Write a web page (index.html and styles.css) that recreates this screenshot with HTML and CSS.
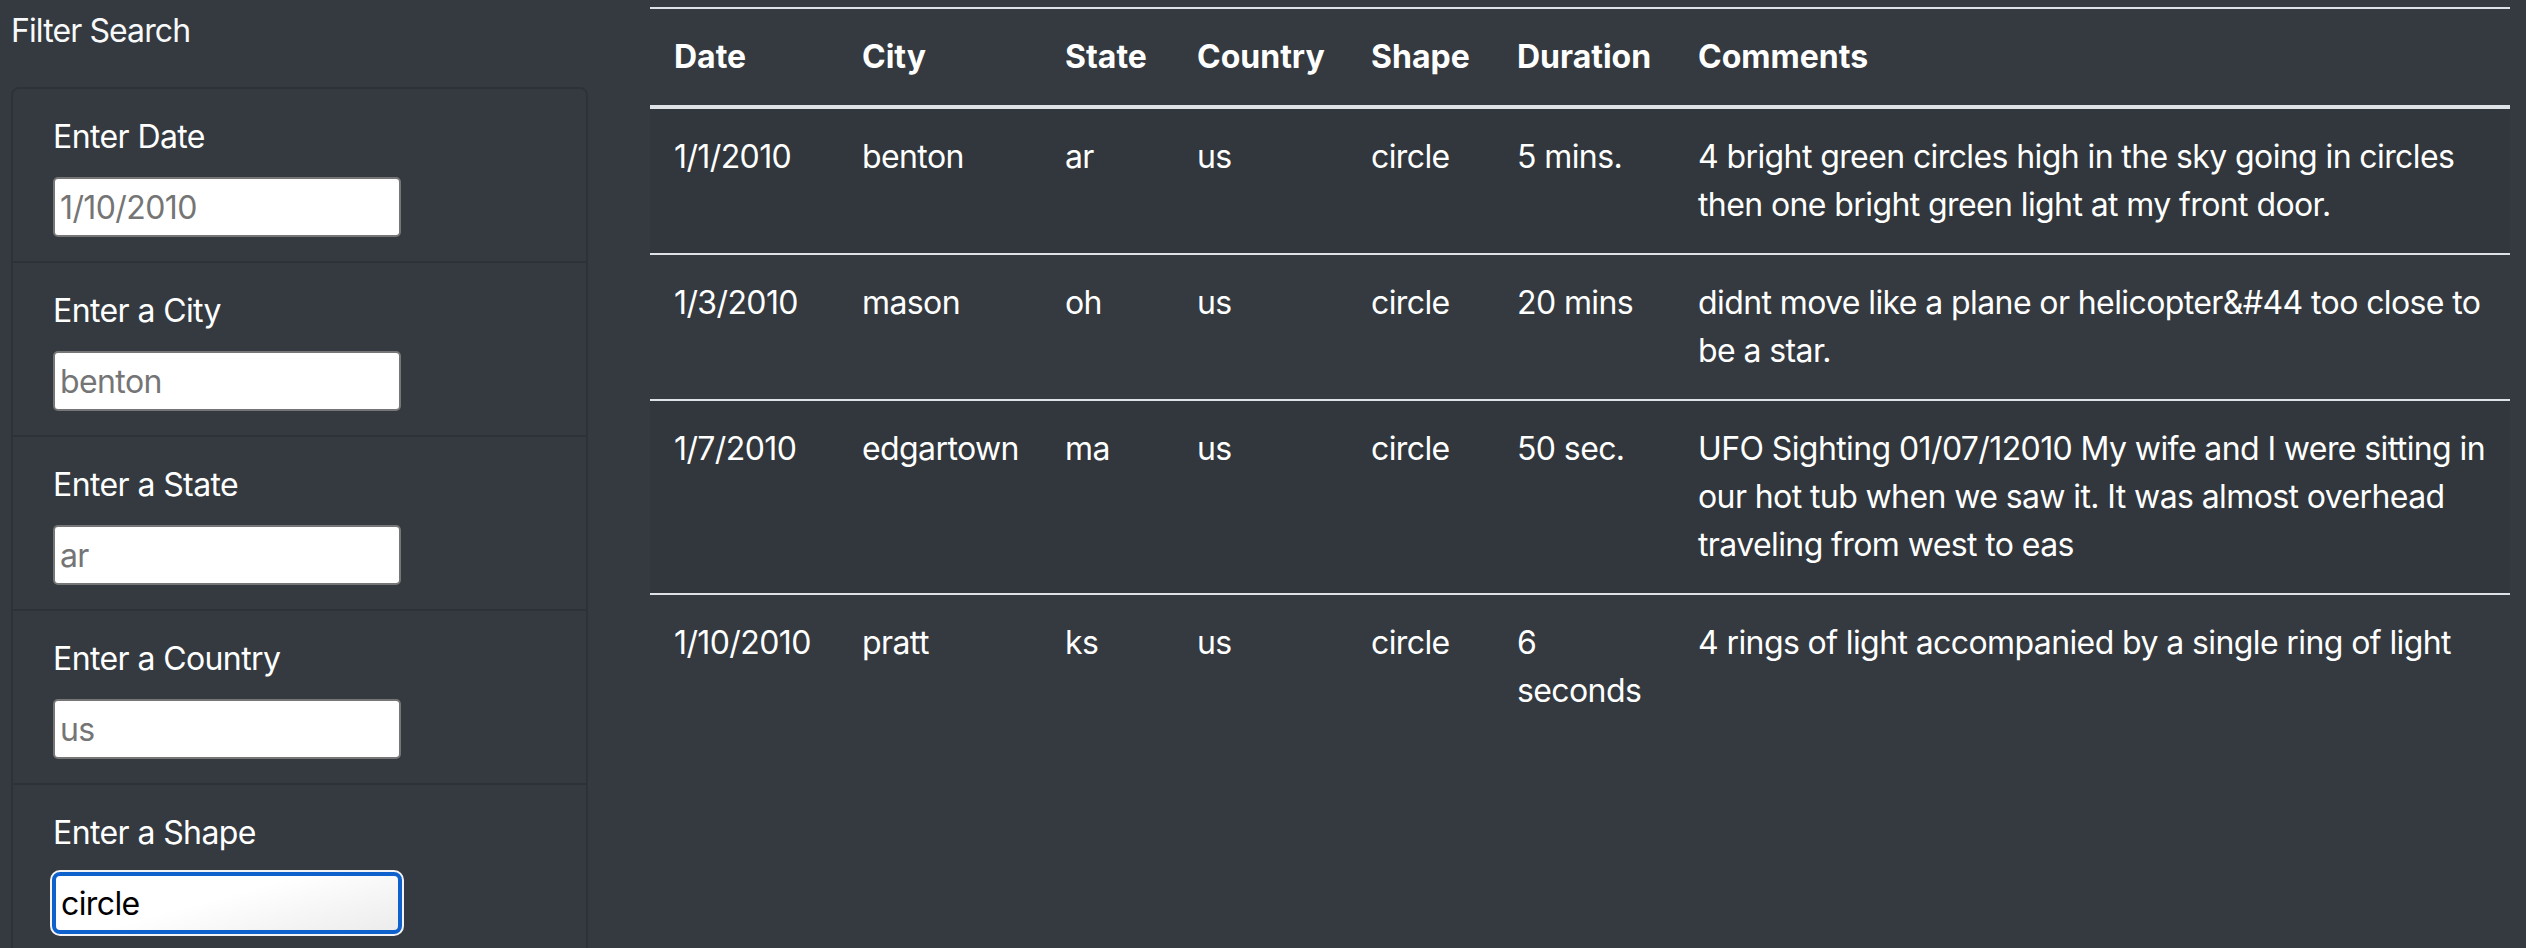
FILE: index.html
```html
<!DOCTYPE html>
<html lang="en">
<head>
<meta charset="utf-8">
<title>UFO Sightings</title>
<link rel="stylesheet" href="styles.css">
</head>
<body>
<div class="page">
  <aside class="sidebar">
    <p class="filter-title">Filter Search</p>
    <ul class="filter-list">
      <li class="filter-item">
        <label class="filter-label" for="datetime">Enter Date</label>
        <input class="filter-input" id="datetime" type="text" placeholder="1/10/2010">
      </li>
      <li class="filter-item">
        <label class="filter-label" for="city">Enter a City</label>
        <input class="filter-input" id="city" type="text" placeholder="benton">
      </li>
      <li class="filter-item">
        <label class="filter-label" for="state">Enter a State</label>
        <input class="filter-input" id="state" type="text" placeholder="ar">
      </li>
      <li class="filter-item">
        <label class="filter-label" for="country">Enter a Country</label>
        <input class="filter-input" id="country" type="text" placeholder="us">
      </li>
      <li class="filter-item">
        <label class="filter-label" for="shape">Enter a Shape</label>
        <input class="filter-input filter-input--active" id="shape" type="text" value="circle">
      </li>
    </ul>
  </aside>
  <main class="results">
    <table class="ufo-table">
      <thead>
        <tr>
          <th class="col-date">Date</th>
          <th class="col-city">City</th>
          <th class="col-state">State</th>
          <th class="col-country">Country</th>
          <th class="col-shape">Shape</th>
          <th class="col-duration">Duration</th>
          <th class="col-comments">Comments</th>
        </tr>
      </thead>
      <tbody>
        <tr>
          <td>1/1/2010</td><td>benton</td><td>ar</td><td>us</td><td>circle</td><td>5 mins.</td>
          <td>4 bright green circles high in the sky going in circles then one bright green light at my front door.</td>
        </tr>
        <tr>
          <td>1/3/2010</td><td>mason</td><td>oh</td><td>us</td><td>circle</td><td>20 mins</td>
          <td>didnt move like a plane or helicopter&amp;#44 too close to be a star.</td>
        </tr>
        <tr>
          <td>1/7/2010</td><td>edgartown</td><td>ma</td><td>us</td><td>circle</td><td>50 sec.</td>
          <td>UFO Sighting 01/07/12010 My wife and I were sitting in our hot tub when we saw it. It was almost overhead traveling from west to eas</td>
        </tr>
        <tr>
          <td>1/10/2010</td><td>pratt</td><td>ks</td><td>us</td><td>circle</td><td>6 seconds</td>
          <td>4 rings of light accompanied by a single ring of light</td>
        </tr>
      </tbody>
    </table>
  </main>
</div>
</body>
</html>
```

FILE: styles.css
```css
* {
  box-sizing: border-box;
}

html,
body {
  margin: 0;
  background: #343a40;
}

body {
  color: #fff;
  font-family: Inter, "Noto Sans", "Liberation Sans", sans-serif;
  font-size: 32px;
  line-height: 48px;
  letter-spacing: -0.6px;
  overflow: hidden;
}

.page {
  display: flex;
  align-items: flex-start;
  gap: 62px;
  padding: 7px 16px 0 11px;
}

.sidebar {
  flex: none;
  width: 577px;
}

.filter-title {
  margin: 0 0 32px;
  color: #f8f9fa;
  letter-spacing: -0.9px;
}

.filter-list {
  list-style: none;
  margin: 0;
  padding: 0;
  border: 2px solid rgba(0, 0, 0, 0.125);
  border-radius: 8px;
}

.filter-item {
  padding: 24px 40px;
  border-top: 2px solid rgba(0, 0, 0, 0.125);
}

.filter-item:first-child {
  border-top: 0;
}

.filter-label {
  display: block;
  margin-bottom: 16px;
}

.filter-input {
  display: block;
  width: 348px;
  height: 60px;
  margin: 0;
  padding: 0 5px;
  border: 2px solid #767676;
  border-radius: 5px;
  background: #fff;
  color: #000;
  font-family: inherit;
  font-size: 32px;
  letter-spacing: -0.6px;
  line-height: normal;
}

.filter-input::placeholder {
  color: #757575;
  opacity: 1;
}

.filter-input--active {
  border: 3px solid #0f61cc;
  border-radius: 7px;
  outline: 2px solid #0f61cc;
  outline-offset: -1px;
  box-shadow: 0 0 0 3px #f4f4f4;
  padding-left: 5px;
  background: linear-gradient(165deg, #ffffff 45%, #ececec 100%);
}

.results {
  flex: none;
}

.ufo-table {
  width: 1860px;
  table-layout: fixed;
  border-collapse: separate;
  border-spacing: 0;
  color: #fff;
}

.ufo-table th,
.ufo-table td {
  padding: 24px;
  text-align: left;
  vertical-align: top;
  border-top: 2px solid #dee2e6;
}

.ufo-table th {
  font-weight: 700;
  letter-spacing: 0;
  vertical-align: bottom;
  border-bottom: 4px solid #dee2e6;
}

.ufo-table tbody tr:first-child td {
  border-top: 0;
}

.ufo-table tbody tr:nth-child(odd) td {
  background: rgba(0, 0, 0, 0.05);
}

.col-date { width: 188px; }
.col-city { width: 203px; }
.col-state { width: 132px; }
.col-country { width: 174px; }
.col-shape { width: 146px; }
.col-duration { width: 181px; }
.col-comments { width: 836px; }
```
